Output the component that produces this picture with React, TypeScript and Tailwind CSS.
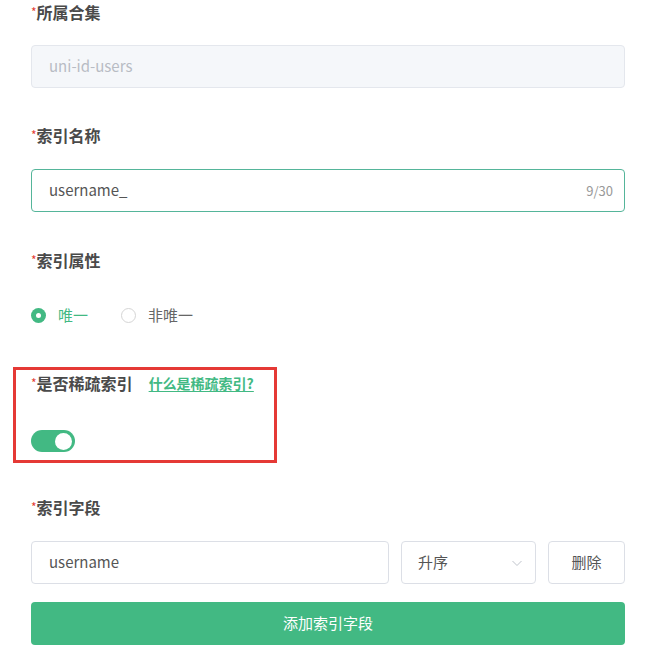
import { useState } from "react";

const font = { fontFamily: '"Microsoft YaHei", "Noto Sans CJK SC", "Noto Sans", sans-serif' };

function Label({ text, children }: { text: string; children?: React.ReactNode }) {
  return (
    <div className="flex items-center h-[22px]">
      <span className="text-[#e43d33] text-[12px] leading-none self-start mt-[5px]">*</span>
      <span className="text-[16px] font-bold text-[#4a4a4a] leading-[22px]">{text}</span>
      {children}
    </div>
  );
}

export default function App() {
  const [unico, setUnico] = useState(true);
  const [sparse, setSparse] = useState(true);
  const [name, setName] = useState("username_");

  return (
    <div className="w-[658px] h-[666px] bg-white overflow-hidden" style={font}>
      <div className="pl-[31px] pr-[33px] pt-[1px]">
        <Label text="所属合集" />
        <div className="mt-[22px] h-[43px] rounded-[4px] border border-[#e4e7ed] bg-[#f5f7fa] flex items-center px-[17px] text-[15px] text-[#b8bcc4]">
          uni-id-users
        </div>

        <div className="mt-[36px]">
          <Label text="索引名称" />
        </div>
        <div className="mt-[23px] h-[43px] rounded-[4px] border border-[#55b59a] bg-white flex items-center pl-[17px] pr-[11px]">
          <input
            value={name}
            onChange={(e) => setName(e.target.value.slice(0, 30))}
            className="flex-1 outline-none text-[15px] text-[#555]"
            style={font}
          />
          <span className="text-[13px] text-[#999]">{name.length}/30</span>
        </div>

        <div className="mt-[37px]">
          <Label text="索引属性" />
        </div>
        <div className="mt-[33px] h-[22px] flex items-center">
          <button onClick={() => setUnico(true)} className="flex items-center">
            {unico ? (
              <span className="w-[15px] h-[15px] rounded-full bg-[#42b983] flex items-center justify-center">
                <span className="w-[5px] h-[5px] rounded-full bg-white" />
              </span>
            ) : (
              <span className="w-[15px] h-[15px] rounded-full border border-[#d5d5d5] bg-white" />
            )}
            <span className={`ml-[12px] text-[15px] ${unico ? "text-[#42b983]" : "text-[#666]"}`}>唯一</span>
          </button>
          <button onClick={() => setUnico(false)} className="flex items-center ml-[33px]">
            {!unico ? (
              <span className="w-[15px] h-[15px] rounded-full bg-[#42b983] flex items-center justify-center">
                <span className="w-[5px] h-[5px] rounded-full bg-white" />
              </span>
            ) : (
              <span className="w-[15px] h-[15px] rounded-full border border-[#d5d5d5] bg-white" />
            )}
            <span className={`ml-[12px] text-[15px] ${!unico ? "text-[#42b983]" : "text-[#666]"}`}>非唯一</span>
          </button>
        </div>

        <div className="relative mt-[46px]">
          <div className="absolute left-[-18px] top-[-5px] w-[264px] h-[96px] border-[3px] border-[#e53935] pointer-events-none" />
          <Label text="是否稀疏索引">
            <a className="ml-[16px] text-[14px] font-bold text-[#42b983] underline underline-offset-2 cursor-pointer">
              什么是稀疏索引?
            </a>
          </Label>
          <button
            onClick={() => setSparse(!sparse)}
            className={`mt-[36px] w-[44px] h-[22px] rounded-full flex items-center px-[3px] ${
              sparse ? "bg-[#42b983] justify-end" : "bg-[#dcdfe6] justify-start"
            }`}
          >
            <span className="w-[17px] h-[17px] rounded-full bg-white" />
          </button>
        </div>

        <div className="mt-[44px]">
          <Label text="索引字段" />
        </div>
        <div className="mt-[23px] flex h-[43px] gap-[12px]">
          <div className="w-[358px] rounded-[4px] border border-[#dcdfe6] flex items-center px-[17px] text-[15px] text-[#555]">
            username
          </div>
          <div className="w-[135px] rounded-[4px] border border-[#dcdfe6] flex items-center justify-between pl-[16px] pr-[12px] text-[15px] text-[#555]">
            升序
            <svg width="12" height="12" viewBox="0 0 12 12" fill="none">
              <path d="M1.5 4l4.5 4.5L10.5 4" stroke="#c0c4cc" strokeWidth="1" />
            </svg>
          </div>
          <button className="w-[77px] rounded-[4px] border border-[#dcdfe6] text-[15px] text-[#555]">删除</button>
        </div>
        <button className="mt-[18px] w-full h-[43px] rounded-[4px] bg-[#42b983] text-white text-[15px]">添加索引字段</button>
      </div>
    </div>
  );
}
